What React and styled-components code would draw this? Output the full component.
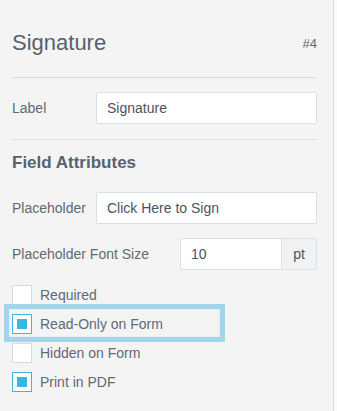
import React from 'react';
import styled, { createGlobalStyle } from 'styled-components';

const GlobalStyle = createGlobalStyle`
  html, body {
    margin: 0;
    padding: 0;
    background: #fafafa;
    font-family: "Liberation Sans", Arial, sans-serif;
  }
`;

const Panel = styled.div`
  box-sizing: border-box;
  width: 334px;
  height: 411px;
  padding: 30px 16px 0 12px;
  background: #f4f4f4;
  border-right: 1px solid #dcdcdc;
  color: #5f6a74;
  font-size: 14px;
`;

const Header = styled.div`
  display: flex;
  align-items: center;
  justify-content: space-between;
  height: 26px;
  margin-bottom: 21px;
`;

const Title = styled.h2`
  margin: 0;
  font-size: 22px;
  font-weight: normal;
  color: #56626c;
`;

const FieldId = styled.span`
  font-size: 13px;
  color: #5f6a74;
`;

const Divider = styled.hr`
  margin: 0;
  border: 0;
  border-top: 1px solid #dcdcdc;
`;

const Section = styled.div`
  padding: ${({ pad }) => pad};
`;

const SectionTitle = styled.h3`
  margin: 13px 0 19px;
  height: 20px;
  line-height: 20px;
  font-size: 17px;
  font-weight: bold;
  color: #58636d;
`;

const Row = styled.div`
  display: flex;
  align-items: center;
  height: 32px;
  margin-bottom: ${({ gap }) => gap || 0}px;
`;

const RowLabel = styled.label`
  flex: none;
  width: ${({ width }) => width}px;
`;

const InputGroup = styled.div`
  flex: 1;
  min-width: 0;
  display: flex;
  height: 32px;
`;

const TextInput = styled.input`
  flex: 1;
  width: 0;
  min-width: 0;
  box-sizing: border-box;
  height: 32px;
  padding: 0 10px;
  border: 1px solid #d9e0e8;
  border-radius: ${({ attached }) => (attached ? '2px 0 0 2px' : '2px')};
  background: #fff;
  font-family: inherit;
  font-size: 14px;
  color: #4a545e;
  outline: none;
`;

const Addon = styled.span`
  flex: none;
  width: 35px;
  display: flex;
  align-items: center;
  justify-content: center;
  box-sizing: border-box;
  border: 1px solid #d9e0e8;
  border-left: 0;
  border-radius: 0 2px 2px 0;
  background: #f1f2f6;
  color: #4a545e;
`;

const CheckList = styled.div`
  margin-top: 10px;
`;

const CheckRow = styled.div`
  position: relative;
  display: flex;
  align-items: center;
  gap: 8px;
  height: 29px;
`;

const Box = styled.span`
  box-sizing: border-box;
  width: 20px;
  height: 20px;
  padding: 4px;
  background: #fff;
  border: 1px solid ${({ checked }) => (checked ? '#3bb5e2' : '#d6dbe2')};

  &::after {
    content: '';
    display: ${({ checked }) => (checked ? 'block' : 'none')};
    width: 10px;
    height: 10px;
    background: #3bb5e2;
  }
`;

const Focus = styled.span`
  position: absolute;
  left: -8px;
  top: -5px;
  width: 221px;
  height: 38px;
  box-sizing: border-box;
  border: 5px solid #a3d5ea;
  box-shadow: inset 0 0 0 1px #e3f1f7;
  pointer-events: none;
`;

const options = [
  { label: 'Required', checked: false },
  { label: 'Read-Only on Form', checked: true, focused: true },
  { label: 'Hidden on Form', checked: false },
  { label: 'Print in PDF', checked: true }
];

const App = () => (
  <>
    <GlobalStyle />
    <Panel>
      <Header>
        <Title>Signature</Title>
        <FieldId>#4</FieldId>
      </Header>
      <Divider />
      <Section pad="14px 0 15px">
        <Row>
          <RowLabel width={84}>Label</RowLabel>
          <InputGroup>
            <TextInput defaultValue="Signature" />
          </InputGroup>
        </Row>
      </Section>
      <Divider />
      <SectionTitle>Field Attributes</SectionTitle>
      <Row gap={14}>
        <RowLabel width={84}>Placeholder</RowLabel>
        <InputGroup>
          <TextInput defaultValue="Click Here to Sign" />
        </InputGroup>
      </Row>
      <Row>
        <RowLabel width={168}>Placeholder Font Size</RowLabel>
        <InputGroup>
          <TextInput attached defaultValue="10" />
          <Addon>pt</Addon>
        </InputGroup>
      </Row>
      <CheckList>
        {options.map((opt) => (
          <CheckRow key={opt.label}>
            {opt.focused && <Focus />}
            <Box checked={opt.checked} />
            <span>{opt.label}</span>
          </CheckRow>
        ))}
      </CheckList>
    </Panel>
  </>
);

export default App;
